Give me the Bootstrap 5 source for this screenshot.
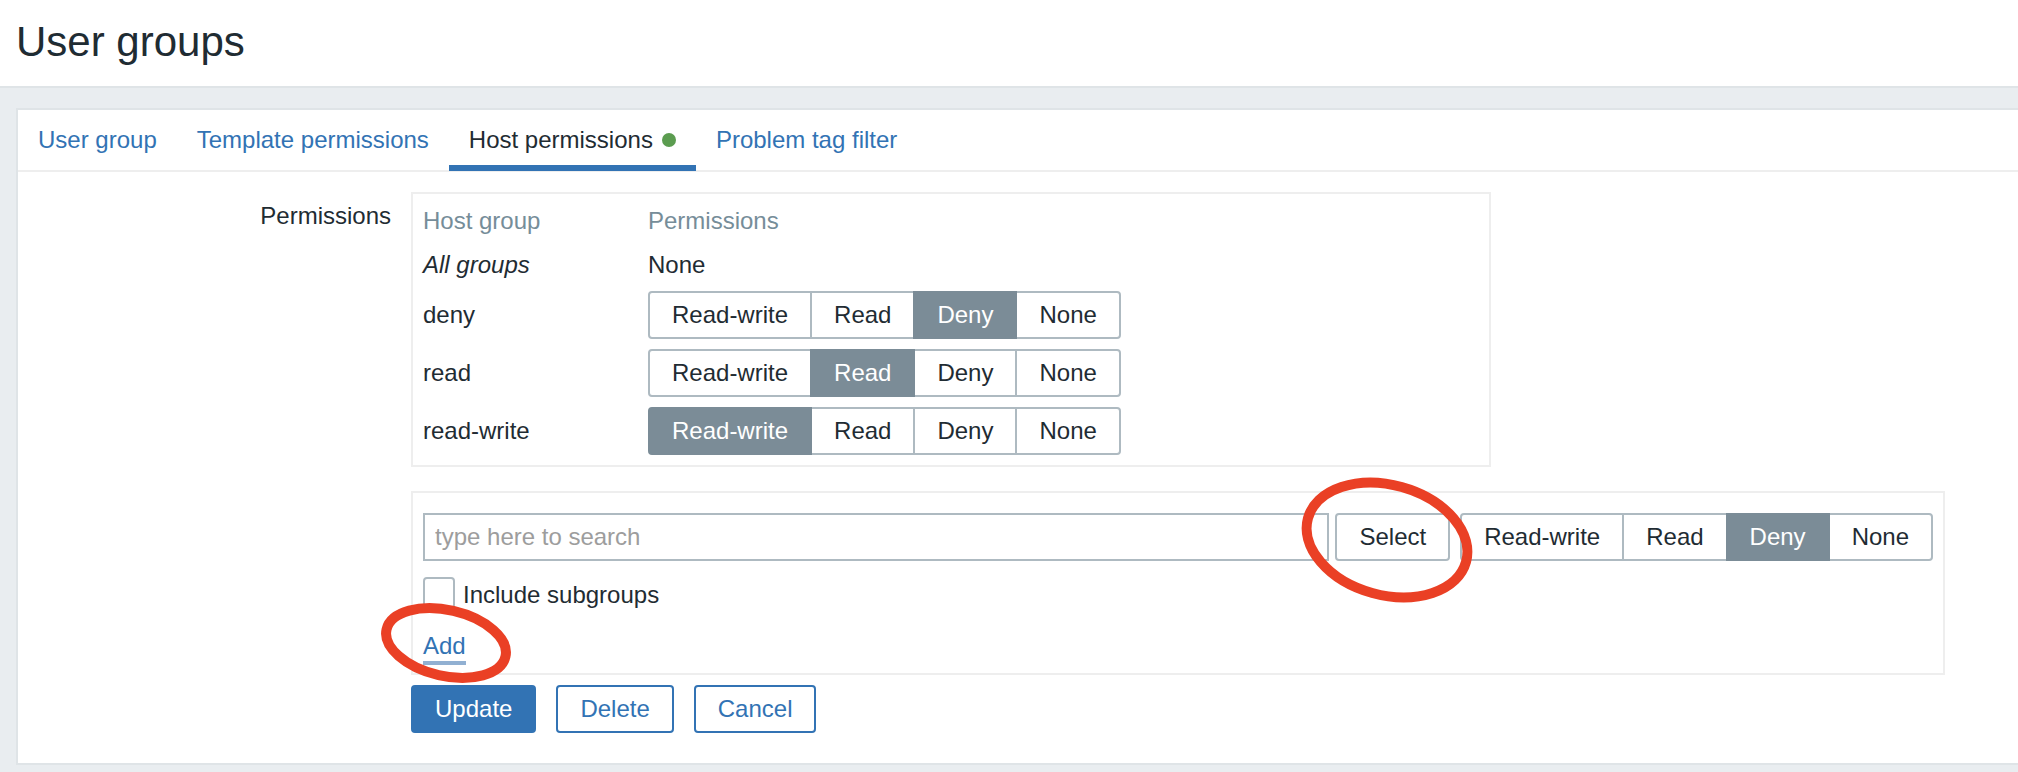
<!DOCTYPE html>
<html lang="en">
<head>
<meta charset="utf-8">
<meta name="viewport" content="width=device-width, initial-scale=1">
<title>User groups</title>
<link href="https://cdn.jsdelivr.net/npm/bootstrap@5.3.0/dist/css/bootstrap.min.css" rel="stylesheet">
<style>
  :root { --ink: #1f2c33; --blue: #3273b4; --slate: #7b8c97; --line: #aebac1; }
  body { background: #e9edf0; color: var(--ink); font: 24px/28px "Liberation Sans", Arial, sans-serif; }
  a { color: var(--blue); text-decoration: none; }
  .page-head { padding: 17px 16px 19px; border-bottom: 2px solid #dfe4e7; }
  .page-head h1 { font-size: 42px; line-height: 50px; font-weight: 400; }
  .panel { margin: 20px 0 7px 16px; border: 2px solid #dfe4e7; border-right: 0; padding-bottom: 30px; }
  .tabs { border-bottom: 2px solid #eee; }
  .tabs .nav-link { padding: 16px 20px 11px; margin-bottom: -1px; border-bottom: 6px solid transparent; color: var(--blue); }
  .tabs .nav-link.active { color: var(--ink); border-bottom-color: var(--blue); }
  .dot { width: 14px; height: 14px; margin-left: 9px; background: #5b9c50; }
  .group-form { padding-top: 20px; }
  .form-label-col { width: 393px; padding: 10px 20px 0 0; }
  .form-body { padding-right: 73px; }
  .frame { border: 2px solid #eee; }
  .rights { max-width: 1080px; padding: 4px 10px 5px; }
  .rights th, .rights td { padding: 5px 0; font-weight: 400; }
  .rights .text-row > * { padding: 9px 0 7px; }
  .rights th:first-child { width: 225px; }
  .rights thead th { color: #768d99; }
  .btn { --bs-btn-font-size: 24px; --bs-btn-line-height: 28px; --bs-btn-padding-x: 22px; --bs-btn-padding-y: 8px;
         --bs-btn-border-width: 2px; --bs-btn-border-radius: 4px; }
  .btn-plain { --bs-btn-color: var(--ink); --bs-btn-bg: #fff; --bs-btn-border-color: var(--line);
         --bs-btn-hover-color: var(--ink); --bs-btn-hover-bg: #f4f6f7; --bs-btn-hover-border-color: var(--line);
         --bs-btn-active-color: #fff; --bs-btn-active-bg: var(--slate); --bs-btn-active-border-color: var(--slate); }
  .btn-group > .btn-check + .btn + .btn-check + .btn { margin-left: -2px; }
  .btn-primary { --bs-btn-bg: var(--blue); --bs-btn-border-color: var(--blue); }
  .btn-outline-primary { --bs-btn-color: var(--blue); --bs-btn-border-color: var(--blue); --bs-btn-hover-bg: var(--blue); }
  .adder { margin-top: 24px; padding: 20px 10px 8px; }
  .adder .form-control { border: 2px solid var(--line); border-radius: 0; padding: 8px 10px; font-size: 24px; line-height: 28px; height: 48px; color: var(--ink); }
  .adder .form-control::placeholder { color: #9d9d9d; }
  .pick { margin: 0 10px 0 6px; }
  .sub { margin: 16px 0 23px; gap: 8px; }
  .sub .form-check-input { width: 32px; height: 32px; margin: 0; border: 2px solid var(--line); border-radius: 4px; }
  .add-link { display: block; padding-bottom: 1px; border-bottom: 4px solid #91b0d2; }
  .actions { margin-top: 10px; gap: 20px; }
  /* Hand-drawn rings lie over the control they point at */
  .ring { position: absolute; z-index: 5; pointer-events: none; overflow: visible; fill: none; stroke: #ea4025; stroke-width: 10px; top: 50%; left: 50%; width: 2px; height: 2px; }
</style>
</head>
<body>
<header class="page-head bg-white"><h1 class="m-0">User groups</h1></header>
<main class="panel bg-white">
  <ul class="nav tabs">
    <li class="nav-item"><a class="nav-link" href="#group">User group</a></li>
    <li class="nav-item"><a class="nav-link" href="#templates">Template permissions</a></li>
    <li class="nav-item"><a class="nav-link active d-flex align-items-center" aria-current="page" href="#hosts">Host permissions<span class="dot rounded-circle"></span></a></li>
    <li class="nav-item"><a class="nav-link" href="#tags">Problem tag filter</a></li>
  </ul>
  <form class="group-form d-flex">
    <div class="form-label-col flex-shrink-0 text-end">Permissions</div>
    <div class="form-body flex-grow-1">
      <div class="frame rights">
        <table class="w-100">
          <thead><tr class="text-row"><th scope="col">Host group</th><th scope="col">Permissions</th></tr></thead>
          <tbody>
            <tr class="text-row"><th scope="row" class="fst-italic">All groups</th><td>None</td></tr>
            <tr><th scope="row">deny</th><td>
              <div class="btn-group d-flex" role="group" aria-label="deny">
                <input class="btn-check" type="radio" name="r1" id="r1a"><label class="btn btn-plain flex-grow-0" for="r1a">Read-write</label>
                <input class="btn-check" type="radio" name="r1" id="r1b"><label class="btn btn-plain flex-grow-0" for="r1b">Read</label>
                <input class="btn-check" type="radio" name="r1" id="r1c" checked><label class="btn btn-plain flex-grow-0" for="r1c">Deny</label>
                <input class="btn-check" type="radio" name="r1" id="r1d"><label class="btn btn-plain flex-grow-0" for="r1d">None</label>
              </div></td></tr>
            <tr><th scope="row">read</th><td>
              <div class="btn-group d-flex" role="group" aria-label="read">
                <input class="btn-check" type="radio" name="r2" id="r2a"><label class="btn btn-plain flex-grow-0" for="r2a">Read-write</label>
                <input class="btn-check" type="radio" name="r2" id="r2b" checked><label class="btn btn-plain flex-grow-0" for="r2b">Read</label>
                <input class="btn-check" type="radio" name="r2" id="r2c"><label class="btn btn-plain flex-grow-0" for="r2c">Deny</label>
                <input class="btn-check" type="radio" name="r2" id="r2d"><label class="btn btn-plain flex-grow-0" for="r2d">None</label>
              </div></td></tr>
            <tr><th scope="row">read-write</th><td>
              <div class="btn-group d-flex" role="group" aria-label="read-write">
                <input class="btn-check" type="radio" name="r3" id="r3a" checked><label class="btn btn-plain flex-grow-0" for="r3a">Read-write</label>
                <input class="btn-check" type="radio" name="r3" id="r3b"><label class="btn btn-plain flex-grow-0" for="r3b">Read</label>
                <input class="btn-check" type="radio" name="r3" id="r3c"><label class="btn btn-plain flex-grow-0" for="r3c">Deny</label>
                <input class="btn-check" type="radio" name="r3" id="r3d"><label class="btn btn-plain flex-grow-0" for="r3d">None</label>
              </div></td></tr>
          </tbody>
        </table>
      </div>
      <div class="frame adder">
        <div class="d-flex">
          <input class="form-control flex-grow-1 w-auto" type="text" placeholder="type here to search" aria-label="Host groups">
          <div class="pick position-relative">
            <button class="btn btn-plain" type="button">Select</button>
            <svg class="ring" aria-hidden="true"><ellipse cx="-6" cy="3" rx="82" ry="55" transform="rotate(15.5 -6 3)"/></svg>
          </div>
          <div class="btn-group flex-shrink-0" role="group" aria-label="Permission">
            <input class="btn-check" type="radio" name="r4" id="r4a"><label class="btn btn-plain" for="r4a">Read-write</label>
            <input class="btn-check" type="radio" name="r4" id="r4b"><label class="btn btn-plain" for="r4b">Read</label>
            <input class="btn-check" type="radio" name="r4" id="r4c" checked><label class="btn btn-plain" for="r4c">Deny</label>
            <input class="btn-check" type="radio" name="r4" id="r4d"><label class="btn btn-plain" for="r4d">None</label>
          </div>
        </div>
        <div class="sub d-flex align-items-end">
          <input class="form-check-input" type="checkbox" id="sub"><label for="sub">Include subgroups</label>
        </div>
        <div class="d-flex"><div class="position-relative">
          <a class="add-link" href="#add">Add</a>
          <svg class="ring" aria-hidden="true"><ellipse cx="2" cy="-6" rx="61" ry="33" transform="rotate(13 2 -6)"/></svg>
        </div></div>
      </div>
      <div class="actions d-flex">
        <button class="btn btn-primary" type="submit">Update</button>
        <button class="btn btn-outline-primary" type="button">Delete</button>
        <button class="btn btn-outline-primary" type="button">Cancel</button>
      </div>
    </div>
  </form>
</main>
<script src="https://cdn.jsdelivr.net/npm/bootstrap@5.3.0/dist/js/bootstrap.bundle.min.js"></script>
</body>
</html>
